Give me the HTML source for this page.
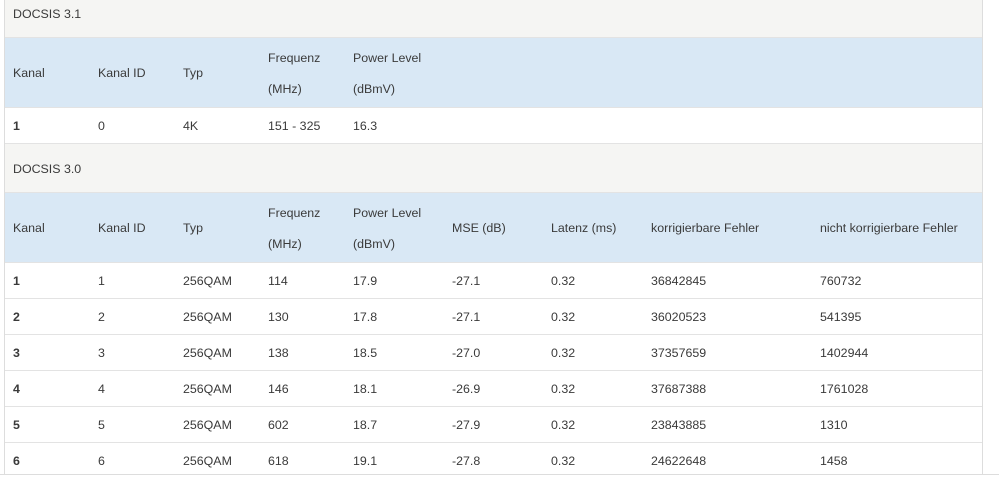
<!DOCTYPE html>
<html><head><meta charset="utf-8"><style>
*{margin:0;padding:0;box-sizing:border-box}
body{width:999px;height:479px;background:#fff;font-family:"Liberation Sans",sans-serif;font-size:12.4px;color:#3a3a3a;position:relative;overflow:hidden}
.r{position:absolute;left:5px;width:977px;border-bottom:1px solid #e3e3e3}
.t{background:#f5f5f3}
.h{background:#d9e8f5}
.w{background:#fff}
.c{position:absolute;white-space:nowrap}
b{font-weight:bold}
</style></head><body>
<div style="position:absolute;left:4px;top:0;width:1px;height:475px;background:#ddd"></div>
<div style="position:absolute;left:982px;top:0;width:1px;height:475px;background:#ddd"></div>
<div style="position:absolute;left:0;top:474px;width:999px;height:1px;background:#ddd"></div>

<div class="r t" style="top:0;height:38px"></div>
<div class="r h" style="top:38px;height:70px"></div>
<div class="r w" style="top:108px;height:36px"></div>
<div class="r t" style="top:144px;height:49px"></div>
<div class="r h" style="top:193px;height:70px"></div>
<div class="r w" style="top:263px;height:36px"></div>
<div class="r w" style="top:299px;height:36px"></div>
<div class="r w" style="top:335px;height:36px"></div>
<div class="r w" style="top:371px;height:36px"></div>
<div class="r w" style="top:407px;height:36px"></div>
<div class="r w" style="top:443px;height:31px;border:none"></div>

<div class="c" style="left:13px;top:7px">DOCSIS 3.1</div>
<div class="c" style="left:13px;top:66px">Kanal</div>
<div class="c" style="left:98px;top:66px">Kanal ID</div>
<div class="c" style="left:183px;top:66px">Typ</div>
<div class="c" style="left:268px;top:51px">Frequenz</div>
<div class="c" style="left:268px;top:82px">(MHz)</div>
<div class="c" style="left:353px;top:51px">Power Level</div>
<div class="c" style="left:353px;top:82px">(dBmV)</div>
<div class="c" style="left:13px;top:119px"><b>1</b></div>
<div class="c" style="left:98px;top:119px">0</div>
<div class="c" style="left:183px;top:119px">4K</div>
<div class="c" style="left:268px;top:119px">151 - 325</div>
<div class="c" style="left:353px;top:119px">16.3</div>

<div class="c" style="left:13px;top:162px">DOCSIS 3.0</div>
<div class="c" style="left:13px;top:221px">Kanal</div>
<div class="c" style="left:98px;top:221px">Kanal ID</div>
<div class="c" style="left:183px;top:221px">Typ</div>
<div class="c" style="left:268px;top:206px">Frequenz</div>
<div class="c" style="left:268px;top:237px">(MHz)</div>
<div class="c" style="left:353px;top:206px">Power Level</div>
<div class="c" style="left:353px;top:237px">(dBmV)</div>
<div class="c" style="left:452px;top:221px">MSE (dB)</div>
<div class="c" style="left:551px;top:221px">Latenz (ms)</div>
<div class="c" style="left:651px;top:221px">korrigierbare Fehler</div>
<div class="c" style="left:820px;top:221px">nicht korrigierbare Fehler</div>

<div class="c" style="left:13px;top:274px"><b>1</b></div><div class="c" style="left:98px;top:274px">1</div><div class="c" style="left:183px;top:274px">256QAM</div><div class="c" style="left:268px;top:274px">114</div><div class="c" style="left:353px;top:274px">17.9</div><div class="c" style="left:452px;top:274px">-27.1</div><div class="c" style="left:551px;top:274px">0.32</div><div class="c" style="left:651px;top:274px">36842845</div><div class="c" style="left:820px;top:274px">760732</div>
<div class="c" style="left:13px;top:310px"><b>2</b></div><div class="c" style="left:98px;top:310px">2</div><div class="c" style="left:183px;top:310px">256QAM</div><div class="c" style="left:268px;top:310px">130</div><div class="c" style="left:353px;top:310px">17.8</div><div class="c" style="left:452px;top:310px">-27.1</div><div class="c" style="left:551px;top:310px">0.32</div><div class="c" style="left:651px;top:310px">36020523</div><div class="c" style="left:820px;top:310px">541395</div>
<div class="c" style="left:13px;top:346px"><b>3</b></div><div class="c" style="left:98px;top:346px">3</div><div class="c" style="left:183px;top:346px">256QAM</div><div class="c" style="left:268px;top:346px">138</div><div class="c" style="left:353px;top:346px">18.5</div><div class="c" style="left:452px;top:346px">-27.0</div><div class="c" style="left:551px;top:346px">0.32</div><div class="c" style="left:651px;top:346px">37357659</div><div class="c" style="left:820px;top:346px">1402944</div>
<div class="c" style="left:13px;top:382px"><b>4</b></div><div class="c" style="left:98px;top:382px">4</div><div class="c" style="left:183px;top:382px">256QAM</div><div class="c" style="left:268px;top:382px">146</div><div class="c" style="left:353px;top:382px">18.1</div><div class="c" style="left:452px;top:382px">-26.9</div><div class="c" style="left:551px;top:382px">0.32</div><div class="c" style="left:651px;top:382px">37687388</div><div class="c" style="left:820px;top:382px">1761028</div>
<div class="c" style="left:13px;top:418px"><b>5</b></div><div class="c" style="left:98px;top:418px">5</div><div class="c" style="left:183px;top:418px">256QAM</div><div class="c" style="left:268px;top:418px">602</div><div class="c" style="left:353px;top:418px">18.7</div><div class="c" style="left:452px;top:418px">-27.9</div><div class="c" style="left:551px;top:418px">0.32</div><div class="c" style="left:651px;top:418px">23843885</div><div class="c" style="left:820px;top:418px">1310</div>
<div class="c" style="left:13px;top:454px"><b>6</b></div><div class="c" style="left:98px;top:454px">6</div><div class="c" style="left:183px;top:454px">256QAM</div><div class="c" style="left:268px;top:454px">618</div><div class="c" style="left:353px;top:454px">19.1</div><div class="c" style="left:452px;top:454px">-27.8</div><div class="c" style="left:551px;top:454px">0.32</div><div class="c" style="left:651px;top:454px">24622648</div><div class="c" style="left:820px;top:454px">1458</div>
</body></html>
